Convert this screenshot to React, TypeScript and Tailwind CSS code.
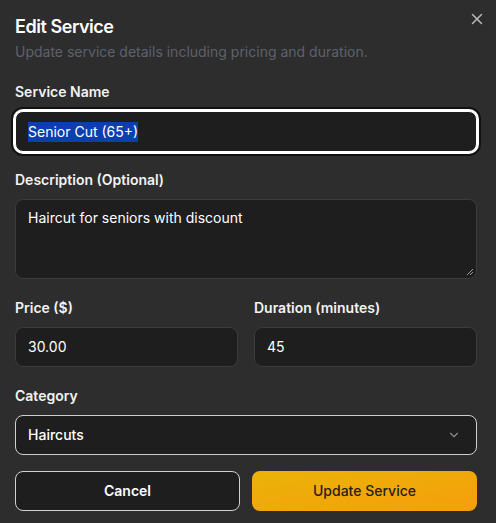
import React from "react";

export default function App() {
  const font = { fontFamily: "Inter, 'Noto Sans', sans-serif" };
  return (
    <div style={font} className="min-h-screen w-full bg-[#2d2d2d] text-white relative">
      <button className="absolute left-[468px] top-[10px] text-[#b8b8b8]" aria-label="Close">
        <svg width="18" height="18" viewBox="0 0 24 24" fill="none" stroke="currentColor" strokeWidth="2" strokeLinecap="round">
          <path d="M18 6 6 18" />
          <path d="M6 6l12 12" />
        </svg>
      </button>
      <div className="pl-[15px] pr-[19px] pt-[13px] flex flex-col">
        <h2 className="text-lg leading-7 font-semibold tracking-tight text-white">Edit Service</h2>
        <p className="text-sm leading-5 text-[#5d616c] mt-[1px]">Update service details including pricing and duration.</p>

        <label className="mt-[20px] text-sm leading-5 font-semibold text-[#f2f2f2]">Service Name</label>
        <div className="mt-[9px] h-[41px] rounded-lg bg-[#1e1e1e] border border-white shadow-[0_0_0_2px_#ffffff,0_0_0_4px_#111111] flex items-center px-[12px] text-sm">
          <span className="bg-[#0a3fb0] text-white leading-[20px]">Senior Cut (65+)</span>
        </div>

        <label className="mt-[18px] text-sm leading-5 font-semibold text-[#f2f2f2]">Description (Optional)</label>
        <div className="mt-[9px] h-[80px] rounded-lg bg-[#1e1e1e] border border-[#3b3b40] px-[12px] pt-[8px] text-sm leading-5 relative">
          Haircut for seniors with discount
          <svg className="absolute right-[2px] bottom-[2px]" width="8" height="8" viewBox="0 0 8 8" stroke="#9a9a9a" strokeWidth="1">
            <path d="M7 1 1 7M7 4 4 7" />
          </svg>
        </div>

        <div className="mt-[19px] grid grid-cols-2 gap-4">
          <div className="flex flex-col">
            <label className="text-sm leading-5 font-semibold text-[#f2f2f2]">Price ($)</label>
            <div className="mt-[9px] h-[40px] rounded-lg bg-[#1e1e1e] border border-[#3b3b40] px-[12px] flex items-center text-sm">30.00</div>
          </div>
          <div className="flex flex-col">
            <label className="text-sm leading-5 font-semibold text-[#f2f2f2]">Duration (minutes)</label>
            <div className="mt-[9px] h-[40px] rounded-lg bg-[#1e1e1e] border border-[#3b3b40] px-[12px] flex items-center text-sm">45</div>
          </div>
        </div>

        <label className="mt-[19px] text-sm leading-5 font-semibold text-[#f2f2f2]">Category</label>
        <div className="mt-[9px] h-[40px] rounded-lg bg-[#1e1e1e] border border-[#cfcfcf] px-[12px] flex items-center justify-between text-sm font-medium">
          <span>Haircuts</span>
          <svg width="14" height="14" viewBox="0 0 24 24" fill="none" stroke="#8a8a8a" strokeWidth="2" strokeLinecap="round" strokeLinejoin="round" className="mr-[3px]">
            <path d="m6 9 6 6 6-6" />
          </svg>
        </div>

        <div className="mt-[16px] grid grid-cols-2 gap-3">
          <button className="h-[40px] rounded-lg bg-[#1e1e1e] border border-[#d0d0d0] text-sm font-semibold text-white">Cancel</button>
          <button className="h-[40px] rounded-lg bg-gradient-to-br from-[#eab308] to-[#f59e0b] text-sm font-medium text-[#1f1f1f]">Update Service</button>
        </div>
      </div>
    </div>
  );
}
